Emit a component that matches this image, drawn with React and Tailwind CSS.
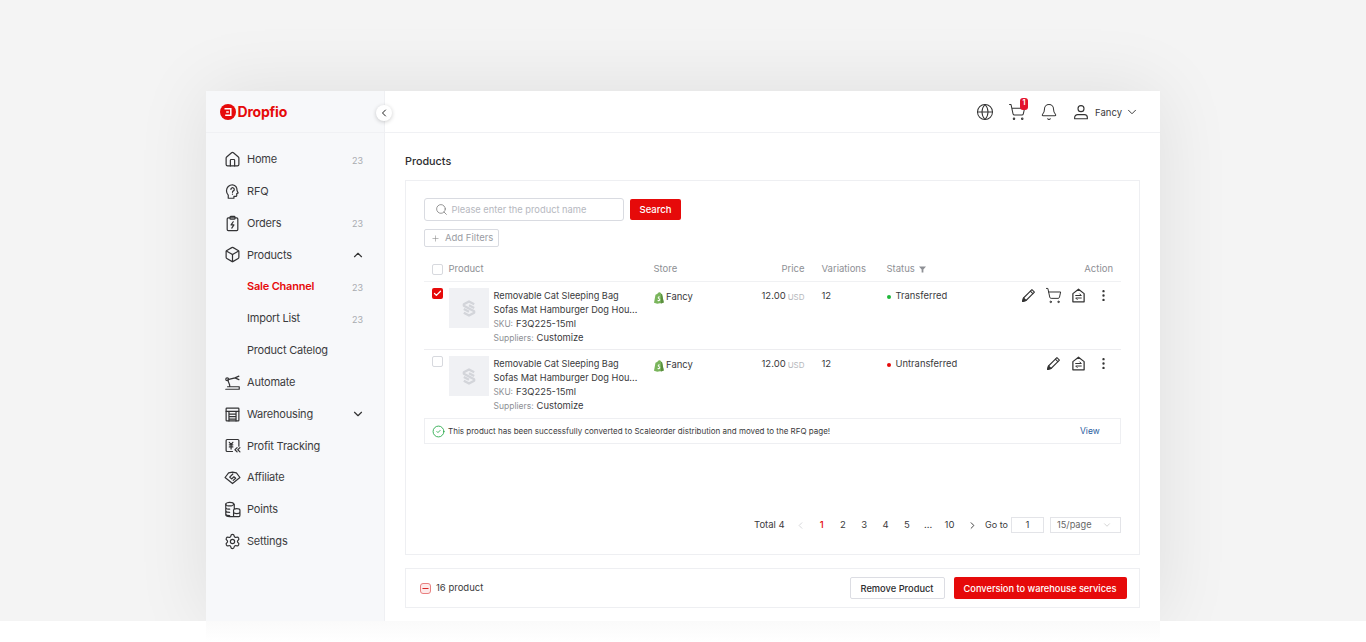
import React from "react";
import { Globe, ShoppingCart, Bell, ChevronDown, ChevronUp, ChevronLeft, ChevronRight, Search, Plus, EllipsisVertical, Settings, Box, House, Check, CircleCheck, Minus } from "lucide-react";

const ic = { width: 17, height: 17, viewBox: "0 0 24 24", fill: "none", stroke: "#333335", strokeWidth: 1.7, strokeLinecap: "round", strokeLinejoin: "round" };

const Rfq = () => (
  <svg {...ic}><path d="M12 2.500a8.500 8.500 0 0 0-8.500 8.500c0 2.600 1 4.400 2.500 6v4.500h8V19h2.500a1.500 1.500 0 0 0 1.500-1.500V15l2-.8-1.600-3.600A8 8 0 0 0 12 2.500Z" /><path d="M9.700 9a2.400 2.400 0 1 1 3.600 2.100c-.8.500-1.300 1-1.300 2" /><path d="M12 15.800v.1" /></svg>
);
const Orders = () => (
  <svg {...ic}><rect x="4.500" y="4" width="15" height="18" rx="1.500" /><rect x="8.500" y="2" width="7" height="4" rx="1" /><path d="M13 9.500 10 14h4l-3 4.500" /></svg>
);
const Automate = () => (
  <svg {...ic}><path d="M2.500 21.500h19v-3.500H5M8 18v-2.500L5.500 9M5.500 8l10-2.500M15.500 5.500 21 3M15.500 5.500 21 8" /><circle cx="4.500" cy="7.500" r="2" /></svg>
);
const Warehouse = () => (
  <svg {...ic}><rect x="3" y="3" width="18" height="18" rx="1" /><path d="M3 7.500h18M7 7.500V21M17 7.500V21M7 11.500h10M7 15h10M7 18.500h10" /></svg>
);
const Profit = () => (
  <svg {...ic}><path d="M21 13V5a1.500 1.500 0 0 0-1.500-1.500h-15A1.500 1.500 0 0 0 3 5v14a1.500 1.500 0 0 0 1.500 1.500H12" /><path d="m7.500 7.500 2.500 3 2.500-3M7.500 11h5M7.500 14h5M10 11v6" /><path d="m18.500 15-3 3 3 3M22.500 15l-3 3 3 3" /></svg>
);
const Affiliate = () => (
  <svg {...ic}><path d="M6.500 5.500 12 4.500l5.500 1 5 6.500L12 20.500 1.500 12Z" /><path d="M12.500 7 8 11.500l3 2.500 3-3 2.500 2-3.500 3" /></svg>
);
const Points = () => (
  <svg {...ic}><ellipse cx="8" cy="4.500" rx="5.500" ry="2.500" /><path d="M2.500 4.500v15c0 1.400 2.500 2.500 5.500 2.500h13c1 0 1.500-1 1.500-2v-7c0-1.200-2-2.200-4.500-2.200-1.200 0-2.500.2-3.500.7V4.500M2.500 9c0 1.400 2.500 2.500 5.500 2.500M2.500 13.500c0 1.400 2.500 2.500 5.500 2.500M2.500 18c0 1.400 2.500 2.500 5.500 2.500M13.500 15.500c0 1.200 2 2.200 4.500 2.200s4.500-1 4.500-2.200M13.500 12.500V22" /></svg>
);
const UserIcon = () => (
  <svg className="ml-[14.500px]" width="18" height="18" viewBox="0 0 24 24" fill="none" stroke="#333" strokeWidth="1.500" strokeLinejoin="round">
    <circle cx="12" cy="7.500" r="4" />
    <path d="M3.500 21v-1.500a4 4 0 0 1 4-4h9a4 4 0 0 1 4 4V21Z" />
  </svg>
);

const NavIcon = ({ children }) => <span className="flex h-[17px] w-[17px] items-center justify-center">{children}</span>;

const Item = ({ icon, label, count, chevron, active }) => (
  <div className="flex h-[31.83px] items-center pl-[18px] pr-[21px]">
    <span className="flex w-[23px] shrink-0 items-center">{icon}</span>
    <span className={active ? "flex-1 text-[11px] font-semibold tracking-[-0.2px] text-[#e60a0a]" : "flex-1 text-[11px] tracking-[-0.2px] text-[#3c3c3e]"}>{label}</span>
    {count && <span className="mt-[2px] text-[9px] text-[#a9abb0]">{count}</span>}
    {chevron === "up" && <ChevronUp className="mr-[-2px]" size={14} strokeWidth={2} color="#333" />}
    {chevron === "down" && <ChevronDown className="mr-[-2px]" size={14} strokeWidth={2} color="#333" />}
  </div>
);

const Shopify = () => (
  <svg width="10" height="12" viewBox="0 0 20 24">
    <path d="M3 5.500 7 3.500C8 1.500 9.500.5 11 .5c2 0 3 1.500 3.500 3l1.500.5 3.500 17-13 2.500L0 21.500Z" fill="#7ab55c" />
    <path d="m14.500 4 1.500.2 3.500 17-6 2.300Z" fill="#5a8e3e" />
    <path d="M12 9.500c-3-1-4.500.5-4.500 2 0 2.300 3 2.300 3 3.800 0 1-1.500 1.300-3 .2L7 18c3 1.300 5.500 0 5.500-2.800 0-2.400-3-2.800-3-3.800 0-.8 1-1 2-.5Z" fill="#fff" />
  </svg>
);

const Transfer = () => (
  <svg width="15" height="15" viewBox="0 0 24 24" fill="none" stroke="#333" strokeWidth="2" strokeLinejoin="round" strokeLinecap="round">
    <path d="M3 9 12 2l9 7v13H3Z" />
    <path d="M7.500 12h9l-2.500-2.500M16.500 16h-9l2.500 2.500" strokeWidth="1.600" />
  </svg>
);

const Pen = () => (
  <svg width="15" height="15" viewBox="0 0 24 24" fill="none" stroke="#333" strokeWidth="1.700" strokeLinejoin="round" strokeLinecap="round">
    <path d="M17.500 2.500 21.500 6.500 8 20 2.500 21.500 4 16Z" />
    <path d="M2.500 21.500 4 16l4 4Z" fill="#333" />
    <path d="m15 5 4 4" />
  </svg>
);

const Thumb = () => (
  <div className="flex h-10 w-10 shrink-0 items-center justify-center bg-[#f0f1f4]">
    <svg width="16" height="17" viewBox="0 0 16 18" fill="none" stroke="#d3d5da" strokeWidth="2.400" strokeLinejoin="round">
      <path d="M13.500 4.500 8 1.500 2.500 4.500V6L13.500 12v1.500L8 16.500l-5.500-3" />
      <path d="M2.500 9.500 8 12.500M13.500 8.500 8 5.500" />
    </svg>
  </div>
);

const Act = ({ children }) => <span className="flex w-[25px] justify-center">{children}</span>;

const Row = ({ checked, status, dot, cart, border }) => (
  <div className={border ? "flex h-[68px] border-b border-[#ededf0] pt-[6px]" : "flex h-[68px] pt-[6px]"}>
    <div className="w-[24.500px] pl-[8px]">
      {checked ? (
        <span className="flex h-[11px] w-[11px] items-center justify-center rounded-[2px] bg-[#e60a0a]"><Check size={9} strokeWidth={3.500} color="#fff" /></span>
      ) : (
        <span className="block h-[11px] w-[11px] rounded-[2px] border border-[#d7d9de] bg-white" />
      )}
    </div>
    <Thumb />
    <div className="ml-[5px] w-[155px] text-[9.200px] text-[#3a3a3c]">
      <div className="mt-[1px] h-[14px] whitespace-nowrap leading-[14px]">Removable Cat Sleeping Bag</div>
      <div className="h-[14px] whitespace-nowrap leading-[14px]">Sofas Mat Hamburger Dog Hou...</div>
      <div className="flex h-[14px] items-center text-[9.400px] leading-[14px]"><span className="text-[8.300px] text-[#8e9095]">SKU:</span><span className="ml-[3px]">F3Q225-15ml</span></div>
      <div className="flex h-[14px] items-center text-[9.400px] leading-[14px]"><span className="text-[8.500px] text-[#8e9095]">Suppliers:</span><span className="ml-[3px]">Customize</span></div>
    </div>
    <div className="ml-[5px] flex h-[17px] w-[85px] items-center pt-[2px] text-[9.500px] text-[#3a3a3c]">
      <Shopify />
      <span className="ml-[2.500px]">Fancy</span>
    </div>
    <div className="flex h-[17px] w-[66px] items-center justify-end text-[9.500px] text-[#3a3a3c]">
      12.00<span className="ml-[2px] text-[8px] text-[#b6b8bc]">USD</span>
    </div>
    <div className="ml-[17px] flex h-[17px] w-[65px] items-center text-[9.500px] text-[#3a3a3c]">12</div>
    <div className="flex h-[17px] w-[108px] items-center text-[9.400px] text-[#3a3a3c]">
      <span className={dot + " h-[4px] w-[4px] rounded-full"} />
      <span className="ml-[5px]">{status}</span>
    </div>
    <div className="flex h-[15px] flex-1 items-center justify-end pr-[5px]">
      <Act><Pen /></Act>
      {cart && <Act><ShoppingCart size={17} strokeWidth={1.400} color="#333" /></Act>}
      <Act><Transfer /></Act>
      <Act><EllipsisVertical size={15} strokeWidth={1.800} color="#333" /></Act>
    </div>
  </div>
);

const P = ({ children, red }) => <span className={red ? "flex w-[21.300px] justify-center font-medium text-[#e60a0a]" : "flex w-[21.300px] justify-center"}>{children}</span>;

export default function App() {
  return (
    <div className="h-[642px] overflow-hidden bg-white [font-family:Inter,'Liberation_Sans',sans-serif]">
      <div className="h-[621px] overflow-hidden bg-[#f4f4f4] pt-[91px]">
        <div className="mx-auto flex h-[530px] w-[954px] bg-white shadow-[0_0_70px_rgba(0,0,0,0.09)]">
          <aside className="w-[179px] shrink-0 border-r border-[#eff0f3] bg-[#f7f8fa]">
            <div className="relative flex h-[42px] items-center border-b border-[#f0f1f4] pl-[14px]">
              <svg width="16" height="16" viewBox="0 0 16 16"><circle cx="8" cy="8" r="8" fill="#e60a0a" /><path d="M4.500 4.800h6.300v6.400H5.200M6.200 8h2.600" fill="none" stroke="#fff" strokeWidth="1.500" /></svg>
              <span className="ml-[1.500px] text-[14px] font-bold tracking-[-0.2px] text-[#e60a0a]">Dropfio</span>
              <span className="absolute right-[-8px] top-[14px] flex h-[16px] w-[16px] items-center justify-center rounded-full bg-white shadow-[0_1px_4px_rgba(0,0,0,0.2)]"><ChevronLeft size={12} strokeWidth={2} color="#222" /></span>
            </div>
            <nav className="pt-[10.500px]">
              <Item icon={<NavIcon><House {...ic} /></NavIcon>} label="Home" count="23" />
              <Item icon={<NavIcon><Rfq /></NavIcon>} label="RFQ" />
              <Item icon={<NavIcon><Orders /></NavIcon>} label="Orders" count="23" />
              <Item icon={<NavIcon><Box {...ic} /></NavIcon>} label="Products" chevron="up" />
              <Item label="Sale Channel" count="23" active />
              <Item label="Import List" count="23" />
              <Item label="Product Catelog" />
              <Item icon={<NavIcon><Automate /></NavIcon>} label="Automate" />
              <Item icon={<NavIcon><Warehouse /></NavIcon>} label="Warehousing" chevron="down" />
              <Item icon={<NavIcon><Profit /></NavIcon>} label="Profit Tracking" />
              <Item icon={<NavIcon><Affiliate /></NavIcon>} label="Affiliate" />
              <Item icon={<NavIcon><Points /></NavIcon>} label="Points" />
              <Item icon={<NavIcon><Settings {...ic} /></NavIcon>} label="Settings" />
            </nav>
          </aside>
          <main className="flex min-w-0 flex-1 flex-col">
            <header className="flex h-[42px] shrink-0 items-center justify-end border-b border-[#f0f1f4] pr-[21px]">
              <Globe size={18} strokeWidth={1.350} color="#333" />
              <span className="relative ml-[14px] flex">
                <ShoppingCart size={18} strokeWidth={1.350} color="#333" />
                <span className="absolute left-[12px] top-[-5px] flex h-[12px] w-[8px] items-center justify-center rounded-[3px] bg-[#e3142d] text-[7px] font-bold text-white">1</span>
              </span>
              <Bell className="ml-[13.500px]" size={18} strokeWidth={1.350} color="#333" />
              <UserIcon />
              <span className="ml-[5px] mt-[3px] text-[9.500px] text-[#3a3a3c]">Fancy</span>
              <ChevronDown className="ml-[3px] mt-[1px]" size={14} strokeWidth={1.600} color="#333" />
            </header>
            <div className="flex flex-1 flex-col px-[20px]">
              <h1 className="mt-[22px] h-[14px] text-[10.800px] font-medium leading-[14px] text-[#2d2d2f]">Products</h1>
              <section className="mt-[11px] flex h-[375px] flex-col border border-[#eeeff2] px-[18px] pt-[17px]">
                <div className="flex h-[23px] items-center">
                  <div className="flex h-[23px] w-[200px] items-center rounded-[3px] border border-[#d9dbe1] pl-[10px]">
                    <Search size={13} strokeWidth={1.400} color="#777" />
                    <span className="ml-[3.500px] pt-[1px] text-[9.300px] text-[#b6b8c0]">Please enter the product name</span>
                  </div>
                  <button className="ml-[6px] h-[21px] w-[51px] rounded-[2px] bg-[#e60a0a] pt-[1px] text-[9.500px] font-medium text-white">Search</button>
                </div>
                <div className="mt-[8px] flex h-[18px] w-[75px] items-center rounded-[2px] border border-[#d9dbe1] pl-[6px] pt-[1px] text-[9.500px] text-[#9a9ca3]">
                  <Plus size={9} strokeWidth={1.500} color="#888" />
                  <span className="ml-[5px]">Add Filters</span>
                </div>
                <div className="mt-[8px] flex h-[27px] items-center border-b border-[#f0f1f3] pt-[3px] text-[9.500px] text-[#8e9095]">
                  <span className="ml-[8px] block h-[11px] w-[11px] rounded-[2px] border border-[#d7d9de] bg-white" />
                  <span className="ml-[5.500px] w-[205px]">Product</span>
                  <span className="w-[85px]">Store</span>
                  <span className="w-[66px] text-right">Price</span>
                  <span className="ml-[17px] w-[65px]">Variations</span>
                  <span className="flex w-[108px] items-center">Status<svg className="ml-[4px]" width="7" height="7" viewBox="0 0 8 8"><path d="M0 .5h8L5 4v3.500H3V4Z" fill="#8e9095" /></svg></span>
                  <span className="flex-1 pr-[8px] text-right">Action</span>
                </div>
                <Row checked status="Transferred" dot="bg-[#1fb83a]" cart border />
                <Row status="Untransferred" dot="bg-[#e60a0a]" />
                <div className="flex h-[26px] w-[697px] items-center border border-[#eeeff2] pl-[7px] text-[8px] text-[#3a3a3c]">
                  <CircleCheck size={13} strokeWidth={1.600} color="#22a744" />
                  <span className="ml-[3px] w-[632px]">This product has been successfully converted to Scaleorder distribution and moved to the RFQ page!</span>
                  <span className="text-[8.500px] text-[#1f5c9e]">View</span>
                </div>
                <div className="mt-[72px] flex h-[18px] w-[697px] items-center justify-end text-[9.500px] text-[#3a3a3c]">
                  <span className="mr-[5px]">Total 4</span>
                  <span className="flex w-[21.300px] justify-center"><ChevronLeft size={11} strokeWidth={1.400} color="#c0c2c7" /></span>
                  <P red>1</P><P>2</P><P>3</P><P>4</P><P>5</P><P>...</P><P>10</P>
                  <span className="flex w-[24px] justify-center"><ChevronRight size={11} strokeWidth={2} color="#333" /></span>
                  <span className="ml-[1px] text-[9px]">Go to</span>
                  <span className="ml-[3px] flex h-[16px] w-[33px] items-center justify-center border border-[#e3e4e8]">1</span>
                  <span className="ml-[6px] flex h-[16px] w-[71px] items-center justify-between border border-[#e3e4e8] pl-[6px] pr-[8px] text-[9.200px] text-[#666]">15/page<ChevronDown size={10} strokeWidth={1.200} color="#aaa" /></span>
                </div>
              </section>
              <section className="mt-[13px] flex h-[40px] items-center border border-[#eeeff2] pl-[14px] pr-[12.500px]">
                <span className="flex h-[11px] w-[11px] items-center justify-center rounded-[3px] border border-[#e98080] bg-[#fdeaea]"><Minus size={9} strokeWidth={2.500} color="#d51a1a" /></span>
                <span className="ml-[5px] mt-[1px] flex-1 text-[9.500px] text-[#3a3a3c]">16 product</span>
                <button className="h-[22px] w-[95px] rounded-[2px] border border-[#dcdde3] pt-[1px] text-[9.300px] font-medium text-[#2d2d2f]">Remove Product</button>
                <button className="ml-[9px] h-[22px] w-[173px] rounded-[2px] bg-[#e60a0a] pt-[1px] text-[9.250px] font-medium text-white">Conversion to warehouse services</button>
              </section>
            </div>
          </main>
        </div>
      </div>
      <div className="mx-auto h-[21px] w-[954px] bg-gradient-to-b from-[#fafafa] to-white" />
    </div>
  );
}
